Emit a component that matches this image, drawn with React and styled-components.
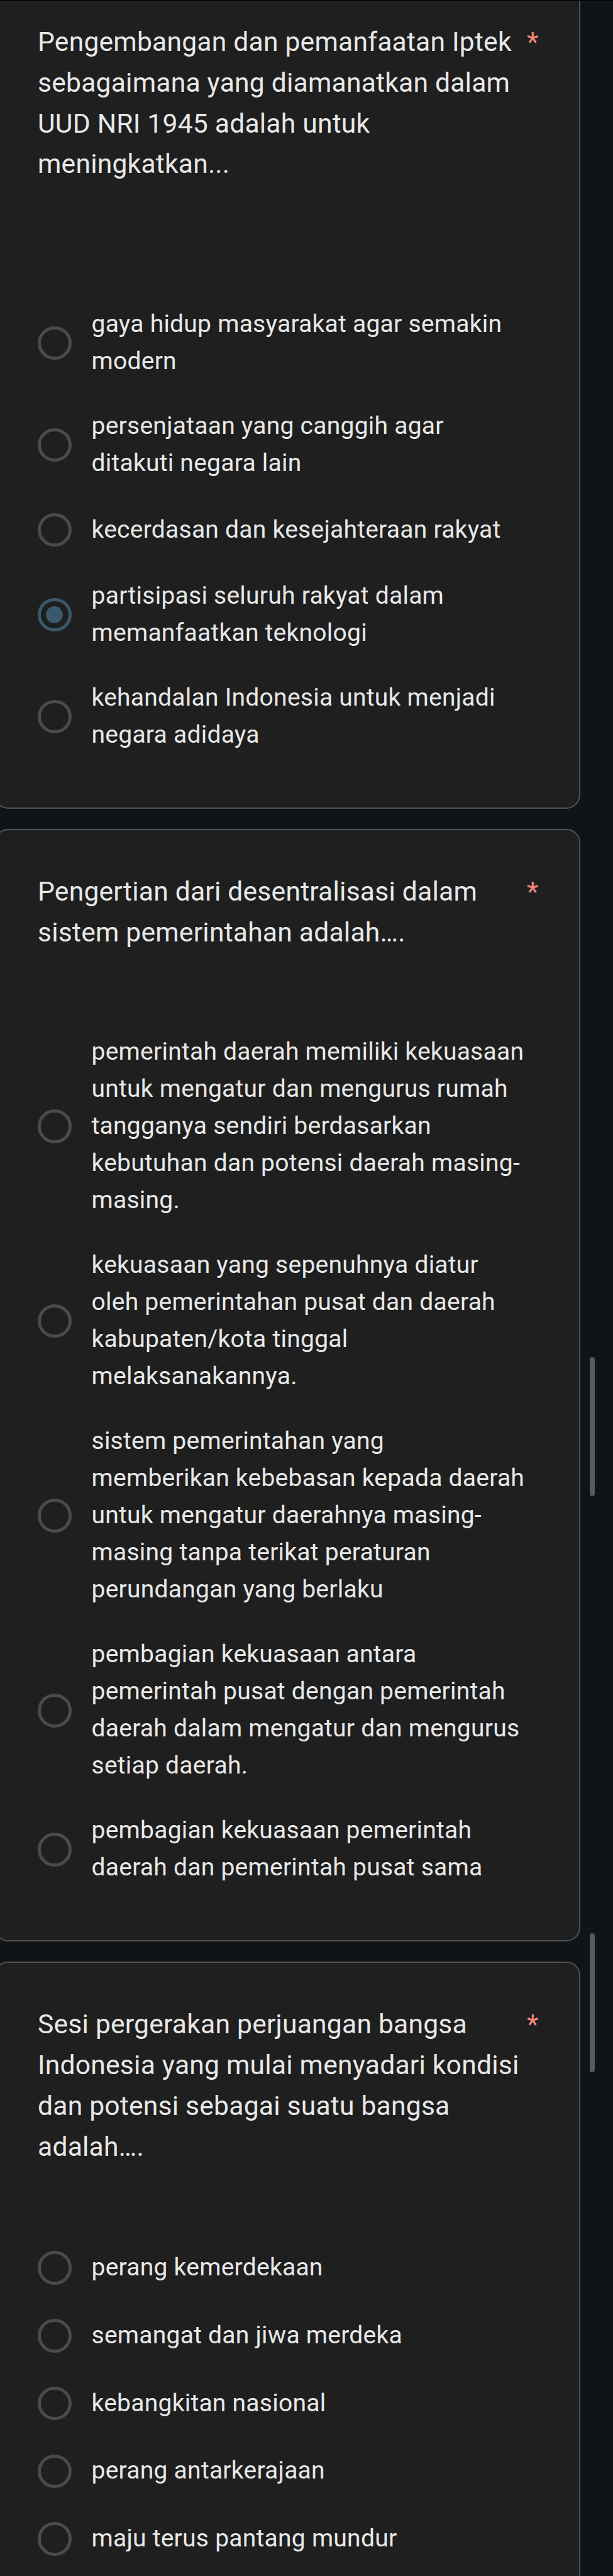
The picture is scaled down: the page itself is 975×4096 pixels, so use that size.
import React, {useState} from 'react';
import styled, {createGlobalStyle} from 'styled-components';

const questions = [
	{
		title: 'Pengembangan dan pemanfaatan Iptek\nsebagaimana yang diamanatkan dalam\nUUD NRI 1945 adalah untuk\nmeningkatkan...\n\u00a0',
		selected: 3,
		options: [
			'gaya hidup masyarakat agar semakin\nmodern',
			'persenjataan yang canggih agar\nditakuti negara lain',
			'kecerdasan dan kesejahteraan rakyat',
			'partisipasi seluruh rakyat dalam\nmemanfaatkan teknologi',
			'kehandalan Indonesia untuk menjadi\nnegara adidaya',
		],
	},
	{
		title: 'Pengertian dari desentralisasi dalam\nsistem pemerintahan adalah….',
		options: [
			'pemerintah daerah memiliki kekuasaan\nuntuk mengatur dan mengurus rumah\ntangganya sendiri berdasarkan\nkebutuhan dan potensi daerah masing-\nmasing.',
			'kekuasaan yang sepenuhnya diatur\noleh pemerintahan pusat dan daerah\nkabupaten/kota tinggal\nmelaksanakannya.',
			'sistem pemerintahan yang\nmemberikan kebebasan kepada daerah\nuntuk mengatur daerahnya masing-\nmasing tanpa terikat peraturan\nperundangan yang berlaku',
			'pembagian kekuasaan antara\npemerintah pusat dengan pemerintah\ndaerah dalam mengatur dan mengurus\nsetiap daerah.',
			'pembagian kekuasaan pemerintah\ndaerah dan pemerintah pusat sama',
		],
	},
	{
		title: 'Sesi pergerakan perjuangan bangsa\nIndonesia yang mulai menyadari kondisi\ndan potensi sebagai suatu bangsa\nadalah….',
		options: [
			'perang kemerdekaan',
			'semangat dan jiwa merdeka',
			'kebangkitan nasional',
			'perang antarkerajaan',
			'maju terus pantang mundur',
		],
	},
];

function Question({question, cut_top}) {
	const [selected, setSelected] = useState(question.selected);

	return (
		<Card $cut_top={cut_top}>
			<Header>
				<Title>{question.title}</Title>
				<Required>*</Required>
			</Header>
			<div role="radiogroup">
				{question.options.map((option, i) => (
					<Option key={option} role="radio" aria-checked={selected === i} onClick={() => setSelected(i)}>
						<Radio $checked={selected === i}>
							{selected === i && <RadioDot />}
						</Radio>
						<Label>{option}</Label>
					</Option>
				))}
			</div>
		</Card>
	);
}

export default function App() {
	return (
		<Page>
			<GlobalStyle />
			{questions.map((question, i) => (
				<Question key={question.title} question={question} cut_top={i === 0} />
			))}
			<ScrollThumb $top={2157} />
			<ScrollThumb $top={3073} />
		</Page>
	);
}

const GlobalStyle = createGlobalStyle`
	* {
		box-sizing: border-box;
	}

	body {
		margin: 0;
		background-color: #0f1418;
	}
`;

const Page = styled.div`
	position: relative;
	display: flex;
	flex-direction: column;
	gap: 32.5px;
	width: 975px;
	height: 4096px;
	overflow: hidden;
	border-top: 1px solid #000000;
	background-color: #0f1418;
	color: #e8e8e8;
	font-family: Roboto, sans-serif;
`;

const Card = styled.div`
	flex: none;
	width: 932px;
	margin-left: -9px;
	padding: ${props => props.$cut_top ? '33px' : '64.8px'} 30px 64.5px 67px;
	background-color: #1f1f1f;
	border: 2px solid #505153;
	border-top-width: ${props => props.$cut_top ? '0' : '2px'};
	border-radius: ${props => props.$cut_top ? '0 0 22px 22px' : '22px'};
`;

const Header = styled.div`
	display: flex;
	margin-bottom: 105.4px;
`;

const Title = styled.div`
	width: 778px;
	font-size: 42.65px;
	line-height: 64.75px;
	letter-spacing: 0.2px;
	white-space: pre;
`;

const Required = styled.div`
	color: #f6857a;
	font-size: 42.65px;
	line-height: 64.75px;
`;

const Option = styled.div`
	display: flex;
	align-items: center;
	gap: 32px;
	min-height: 107.75px;
	padding: 23px 0 21px;
	cursor: pointer;
`;

const Radio = styled.div`
	display: flex;
	flex: none;
	align-items: center;
	justify-content: center;
	width: 53.5px;
	height: 53.5px;
	margin-top: 1px;
	border: 5px solid ${props => props.$checked ? '#3a596b' : '#4a4b4e'};
	border-radius: 50%;
`;

const RadioDot = styled.div`
	width: 27px;
	height: 27px;
	border-radius: 50%;
	background-color: #3a596b;
`;

const Label = styled.div`
	font-size: 39.05px;
	line-height: 59.03px;
	letter-spacing: 0.23px;
	white-space: pre;
`;

const ScrollThumb = styled.div`
	position: absolute;
	top: ${props => props.$top}px;
	left: 937.5px;
	width: 8px;
	height: 221px;
	border-radius: 4px;
	background-color: #58595b;
`;
